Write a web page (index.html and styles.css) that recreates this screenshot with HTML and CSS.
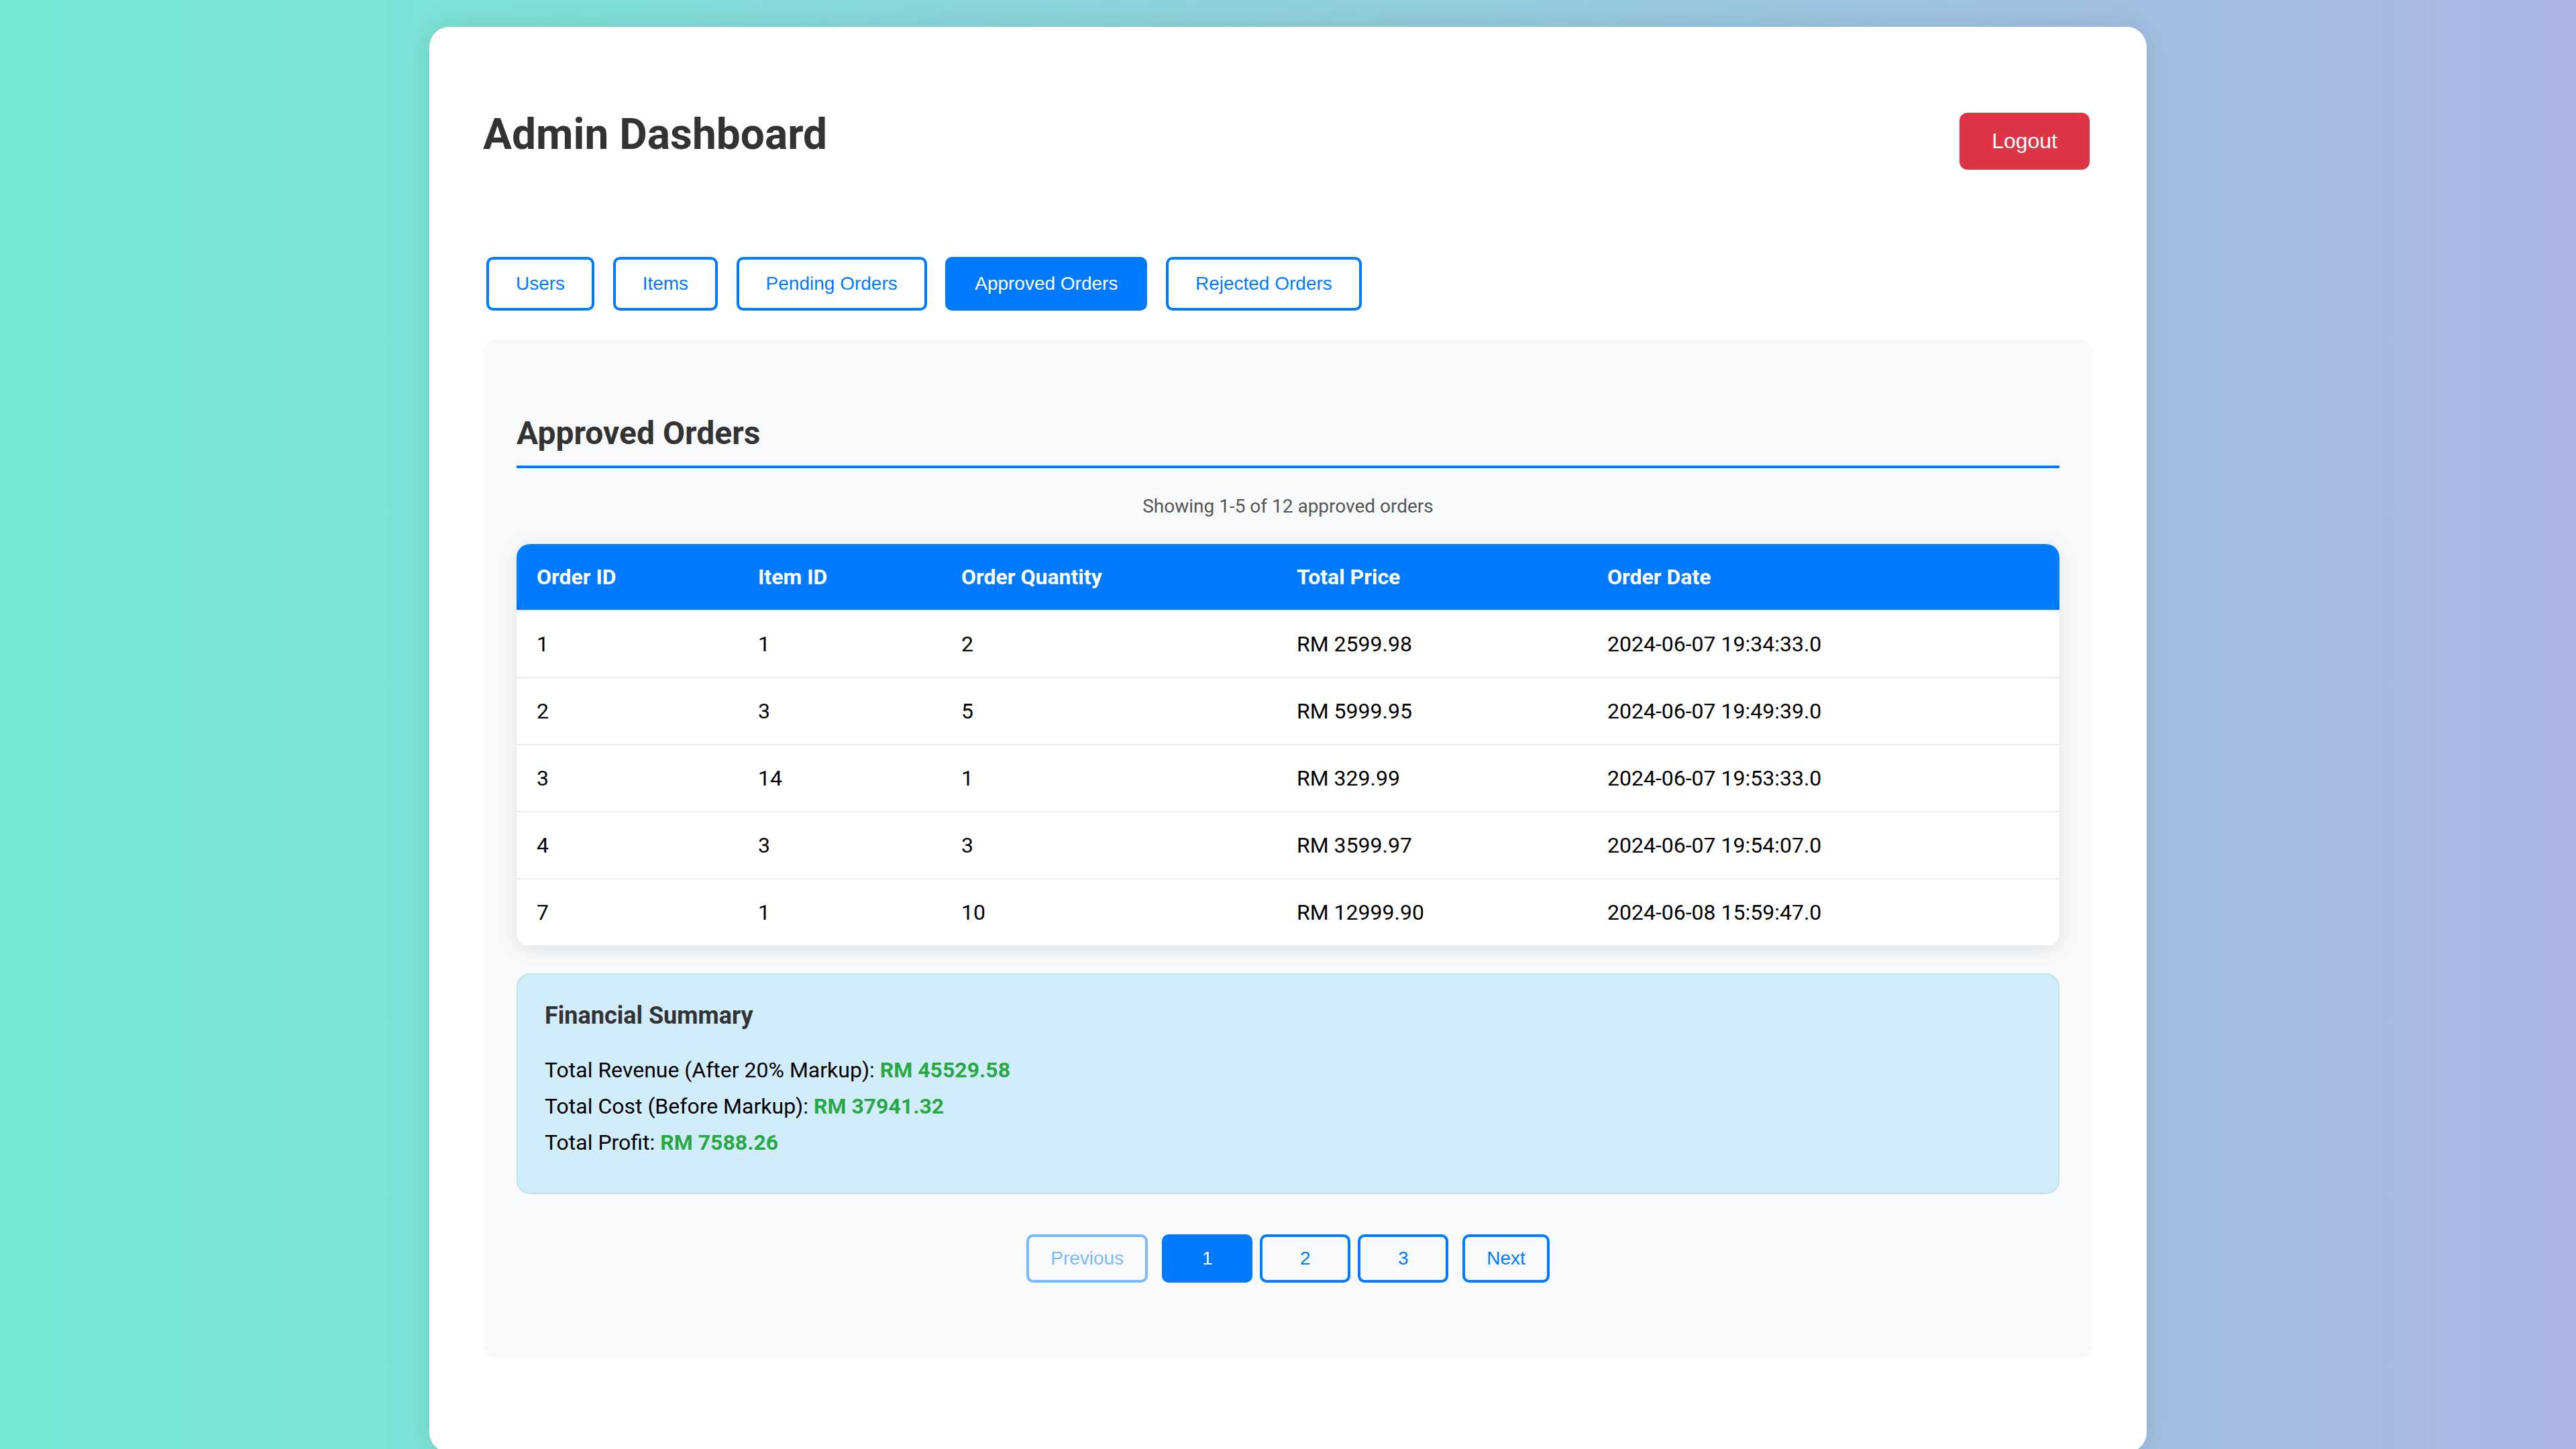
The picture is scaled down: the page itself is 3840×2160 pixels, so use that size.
FILE: index.html
```html
<!DOCTYPE html>
<html lang="en">
<head>
<meta charset="utf-8">
<title>Admin Dashboard</title>
<link rel="stylesheet" href="styles.css">
</head>
<body>
<div class="card">
  <div class="header">
    <h1 class="title">Admin Dashboard</h1>
    <button class="logout">Logout</button>
  </div>
  <div class="tabs">
    <button class="tab">Users</button>
    <button class="tab">Items</button>
    <button class="tab">Pending Orders</button>
    <button class="tab active">Approved Orders</button>
    <button class="tab">Rejected Orders</button>
  </div>
  <section class="panel">
    <h2 class="panel-title">Approved Orders</h2>
    <p class="showing">Showing 1-5 of 12 approved orders</p>
    <div class="table-wrap">
      <table class="orders">
        <colgroup>
          <col class="c1"><col class="c2"><col class="c3"><col class="c4"><col class="c5">
        </colgroup>
        <thead>
          <tr><th>Order ID</th><th>Item ID</th><th>Order Quantity</th><th>Total Price</th><th>Order Date</th></tr>
        </thead>
        <tbody>
          <tr><td>1</td><td>1</td><td>2</td><td>RM 2599.98</td><td>2024-06-07 19:34:33.0</td></tr>
          <tr><td>2</td><td>3</td><td>5</td><td>RM 5999.95</td><td>2024-06-07 19:49:39.0</td></tr>
          <tr><td>3</td><td>14</td><td>1</td><td>RM 329.99</td><td>2024-06-07 19:53:33.0</td></tr>
          <tr><td>4</td><td>3</td><td>3</td><td>RM 3599.97</td><td>2024-06-07 19:54:07.0</td></tr>
          <tr><td>7</td><td>1</td><td>10</td><td>RM 12999.90</td><td>2024-06-08 15:59:47.0</td></tr>
        </tbody>
      </table>
    </div>
    <div class="summary">
      <h3 class="summary-title">Financial Summary</h3>
      <p class="summary-line">Total Revenue (After 20% Markup): <span class="value">RM 45529.58</span></p>
      <p class="summary-line">Total Cost (Before Markup): <span class="value">RM 37941.32</span></p>
      <p class="summary-line">Total Profit: <span class="value">RM 7588.26</span></p>
    </div>
    <div class="pagination">
      <button class="page-btn disabled">Previous</button>
      <div class="pages">
        <button class="page-btn num active">1</button>
        <button class="page-btn num">2</button>
        <button class="page-btn num">3</button>
      </div>
      <button class="page-btn">Next</button>
    </div>
  </section>
</div>
</body>
</html>
```
FILE: styles.css
```css
html {
  background: linear-gradient(to right, #74ebd5, #acb6e5);
  min-height: 100%;
}
body {
  margin: 0;
  padding: 40px 0 0;
  font-family: Roboto, "Liberation Sans", Arial, sans-serif;
  color: #000;
}
.card {
  width: 2400px;
  margin: 0 auto;
  padding: 80px 80px 80px;
  background: #fff;
  border-radius: 30px;
  box-shadow: 0 0 40px rgba(0, 0, 0, 0.1);
}
.header {
  display: flex;
  justify-content: space-between;
  align-items: flex-start;
}
.title {
  margin: 43px 0 0;
  font-family: Roboto, sans-serif;
  font-weight: 700;
  font-size: 64px;
  line-height: normal;
  color: #333;
}
.logout {
  margin-top: 48px;
  margin-right: 5px;
  padding: 24px 48px;
  border: none;
  border-radius: 12px;
  background: #dc3545;
  color: #fff;
  font-family: "Liberation Sans", Arial, sans-serif;
  font-size: 32px;
}
.tabs {
  display: flex;
  gap: 27.5px;
  margin-top: 130px;
  padding-left: 5px;
}
.tab {
  padding: 20px 40px;
  border: 4px solid #007bff;
  border-radius: 10px;
  background: #fff;
  color: #007bff;
  font-family: "Liberation Sans", Arial, sans-serif;
  font-size: 28px;
}
.tab.active {
  background: #007bff;
  color: #fff;
}
.panel {
  margin-top: 43px;
  margin-bottom: 61px;
  padding: 50px 50px 50px;
  background: #f8f9fa;
  border-radius: 20px;
}
.panel-title {
  margin: 61px 0 40px;
  padding-bottom: 20px;
  border-bottom: 4px solid #007bff;
  font-weight: 700;
  font-size: 48px;
  line-height: normal;
  color: #333;
}
.showing {
  margin: 39px 0 40px;
  text-align: center;
  font-size: 28px;
  color: #555;
}
.table-wrap {
  background: #fff;
  border-radius: 20px;
  overflow: hidden;
  box-shadow: 0 4px 24px rgba(0, 0, 0, 0.1);
}
.orders {
  width: 100%;
  border-collapse: collapse;
  table-layout: fixed;
}
.c1 { width: 330px; }
.c2 { width: 303px; }
.c3 { width: 500px; }
.c4 { width: 463px; }
.c5 { width: 704px; }
.orders th,
.orders td {
  padding: 30px;
  text-align: left;
  font-size: 32px;
  line-height: normal;
  border-bottom: 2px solid #e9ecef;
}
.orders th {
  background: #007bff;
  color: #fff;
  font-weight: 700;
}
.orders td {
  color: #000;
}
.summary {
  margin-top: 40px;
  padding: 40px;
  background: #d1ecfa;
  border: 2px solid #bee5eb;
  border-radius: 20px;
}
.summary-title {
  margin: 0 0 41px;
  font-weight: 700;
  font-size: 36px;
  line-height: normal;
  color: #333;
}
.summary-line {
  margin: 16px 0;
  font-size: 32px;
  line-height: normal;
  color: #000;
}
.value {
  font-weight: 700;
  color: #28a745;
}
.pagination {
  display: flex;
  justify-content: center;
  gap: 21px;
  margin-top: 60px;
  margin-bottom: 62px;
}
.pages {
  display: flex;
  gap: 11px;
}
.page-btn {
  box-sizing: border-box;
  padding: 16px 32px;
  border: 4px solid #007bff;
  border-radius: 10px;
  background: transparent;
  color: #007bff;
  font-family: "Liberation Sans", Arial, sans-serif;
  font-size: 28px;
}
.page-btn.num {
  min-width: 135px;
}
.page-btn.active {
  background: #007bff;
  color: #fff;
}
.page-btn.disabled {
  opacity: 0.5;
}
```
